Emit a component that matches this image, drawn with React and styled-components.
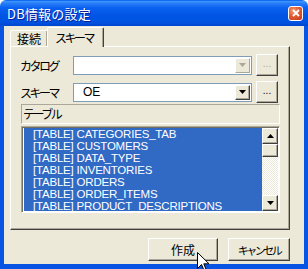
import styled, { createGlobalStyle, css } from "styled-components";

const GlobalStyle = createGlobalStyle`
  html, body { margin: 0; padding: 0; background: #fff; }
  body { font-family: "Noto Sans CJK JP", "Liberation Sans", sans-serif; }
`;

const tablas = [
  "CATEGORIES_TAB",
  "CUSTOMERS",
  "DATA_TYPE",
  "INVENTORIES",
  "ORDERS",
  "ORDER_ITEMS",
  "PRODUCT_DESCRIPTIONS",
];

const face = css`
  background: #ece9d8;
  border: 1px solid;
  border-color: #fff #404040 #404040 #fff;
  box-shadow: inset -1px -1px 0 #aca899;
  box-sizing: border-box;
`;

function Flecha({ abajo = true, color = "#000" }) {
  return (
    <svg width="7" height="4" viewBox="0 0 7 4">
      <polygon points={abajo ? "0,0 7,0 3.5,4" : "0,4 7,4 3.5,0"} fill={color} />
    </svg>
  );
}

function Cursor() {
  return (
    <CursorSvg width="13" height="20" viewBox="0 0 13 20">
      <path
        d="M0.5 0.5 L0.5 16.5 L4.5 12.5 L7.5 19.5 L9.5 18.5 L6.8 11.8 L12 11.8 Z"
        fill="#fff"
        stroke="#000"
        strokeWidth="1"
      />
    </CursorSvg>
  );
}

function Combo({ valor, deshabilitado }) {
  return (
    <ComboBox>
      <ComboValor>{valor}</ComboValor>
      <ComboBoton $off={deshabilitado}>
        <Flecha color={deshabilitado ? "#aca899" : "#000"} />
      </ComboBoton>
    </ComboBox>
  );
}

export default function App() {
  return (
    <>
      <GlobalStyle />
      <Ventana>
        <TitleBar>
          <Titulo>DB情報の設定</Titulo>
          <BtnCerrar>
            <svg width="8" height="8" viewBox="0 0 8 8">
              <path d="M1 1 L7 7 M7 1 L1 7" stroke="#fff" strokeWidth="1.8" />
            </svg>
          </BtnCerrar>
        </TitleBar>
        <Cuerpo>
          <Tabs>
            <Tab>接続</Tab>
            <Tab $activo $kana>スキーマ</Tab>
          </Tabs>
          <Panel>
            <Fila>
              <Etiqueta>カタログ</Etiqueta>
              <Combo valor="" deshabilitado />
              <BtnMini $off>...</BtnMini>
            </Fila>
            <Fila>
              <Etiqueta>スキーマ</Etiqueta>
              <Combo valor="OE" />
              <BtnMini>...</BtnMini>
            </Fila>
            <CajaTabla>テーブル</CajaTabla>
            <Lista>
              <Items>
                {tablas.map((t) => (
                  <Item key={t}>[TABLE] {t}</Item>
                ))}
              </Items>
              <Scroll>
                <ScrollBtn>
                  <Flecha abajo={false} />
                </ScrollBtn>
                <Thumb />
                <Pista />
                <ScrollBtn>
                  <Flecha />
                </ScrollBtn>
              </Scroll>
            </Lista>
          </Panel>
          <Pie>
            <Boton $ancho="70px">作成</Boton>
            <Boton $ancho="62px" $kana>キャンセル</Boton>
          </Pie>
        </Cuerpo>
        <Cursor />
      </Ventana>
    </>
  );
}

const Ventana = styled.div`
  position: relative;
  width: 308px;
  height: 269px;
  display: flex;
  flex-direction: column;
  overflow: hidden;
`;

const TitleBar = styled.div`
  height: 26px;
  flex-shrink: 0;
  display: flex;
  align-items: center;
  justify-content: space-between;
  padding: 0 5px 0 7px;
  box-sizing: border-box;
  border-radius: 6px 6px 0 0;
  background: linear-gradient(
    to bottom,
    #0058ee 0%,
    #3d95ff 6%,
    #2a80f8 12%,
    #0a61f0 30%,
    #0055e5 60%,
    #0053e0 85%,
    #0045cf 100%
  );
`;

const Titulo = styled.span`
  color: #fff;
  font-size: 13px;
  letter-spacing: 0.2px;
  text-shadow: 1px 1px 0 #0a1e9a;
`;

const BtnCerrar = styled.div`
  width: 15px;
  height: 15px;
  box-sizing: border-box;
  border: 1px solid #fff;
  border-radius: 3px;
  background: radial-gradient(circle at 35% 30%, #f09b7a 0%, #e35b2f 45%, #c4361a 100%);
  display: flex;
  align-items: center;
  justify-content: center;
`;

const Cuerpo = styled.div`
  flex: 1;
  display: flex;
  flex-direction: column;
  background: #ece9d8;
  border: 4px solid #0854e3;
  border-top: none;
  border-bottom-width: 5px;
  padding: 2px 14px 0 6px;
`;

const Tabs = styled.div`
  display: flex;
  align-items: flex-end;
  height: 18px;
  position: relative;
  z-index: 1;
`;

const Tab = styled.div`
  font-size: 12px;
  color: #000;
  background: #ece9d8;
  border: 1px solid;
  border-bottom: none;
  border-color: #fff #404040 transparent #fff;
  box-shadow: inset -1px 0 0 #aca899;
  border-radius: 2px 2px 0 0;
  height: 15px;
  line-height: 15px;
  padding: 0 6px 0 6px;
  letter-spacing: ${({ $kana }) => ($kana ? "-2.5px" : "0")};
  ${({ $activo }) =>
    $activo &&
    css`
      height: 19px;
      line-height: 19px;
      margin-left: -1px;
      margin-bottom: -1px;
      padding: 0 10px 0 7px;
    `}
`;

const Panel = styled.div`
  height: 184px;
  box-sizing: border-box;
  border: 1px solid;
  border-color: #fff #404040 #404040 #fff;
  box-shadow: inset -1px -1px 0 #aca899;
  padding: 7px 9px 0 9px;
  display: flex;
  flex-direction: column;
`;

const Fila = styled.div`
  display: flex;
  align-items: center;
  height: 22px;
  margin-bottom: 5px;
  &:nth-child(2) {
    margin-bottom: 1px;
  }
`;

const Etiqueta = styled.span`
  width: 53px;
  font-size: 12px;
  letter-spacing: -2.5px;
  color: #000;
`;

const ComboBox = styled.div`
  width: 179px;
  height: 19px;
  box-sizing: border-box;
  border: 1px solid #7f9db9;
  background: #fff;
  display: flex;
  align-items: center;
  padding: 1px;
`;

const ComboValor = styled.span`
  flex: 1;
  font-family: "Liberation Sans", sans-serif;
  font-size: 12px;
  padding-left: 8px;
  color: #000;
`;

const ComboBoton = styled.div`
  ${face}
  width: 15px;
  height: 15px;
  display: flex;
  align-items: center;
  justify-content: center;
  ${({ $off }) =>
    $off &&
    css`
      border-color: #fff #aca899 #aca899 #fff;
      box-shadow: none;
    `}
`;

const BtnMini = styled.div`
  ${face}
  width: 22px;
  height: 22px;
  margin-left: 4px;
  display: flex;
  align-items: center;
  justify-content: center;
  font-family: "Liberation Sans", sans-serif;
  font-size: 10px;
  line-height: 10px;
  padding-bottom: 2px;
  color: ${({ $off }) => ($off ? "#aca899" : "#000")};
`;

const CajaTabla = styled.div`
  height: 20px;
  margin-left: 1px;
  box-sizing: border-box;
  border: 1px solid;
  border-color: #aca899 #fff #fff #aca899;
  font-size: 12px;
  letter-spacing: -2.5px;
  line-height: 17px;
  padding-left: 1px;
  color: #000;
`;

const Lista = styled.div`
  margin-top: 2px;
  margin-left: 1px;
  height: 87px;
  box-sizing: border-box;
  border: 1px solid;
  border-color: #aca899 #fff #fff #aca899;
  box-shadow: inset 1px 1px 0 #716f64;
  background: #fff;
  padding: 1px 1px 1px 2px;
  display: flex;
`;

const Items = styled.div`
  flex: 1;
  overflow: hidden;
  background: #fff;
`;

const Item = styled.div`
  background: #316ac5;
  color: #fff;
  font-family: "Liberation Sans", sans-serif;
  font-size: 11.5px;
  letter-spacing: -0.2px;
  height: 12px;
  line-height: 12px;
  padding-left: 9px;
  white-space: nowrap;
`;

const Scroll = styled.div`
  width: 16px;
  display: flex;
  flex-direction: column;
`;

const ScrollBtn = styled.div`
  ${face}
  height: 16px;
  display: flex;
  align-items: center;
  justify-content: center;
`;

const Thumb = styled.div`
  ${face}
  height: 13px;
`;

const Pista = styled.div`
  flex: 1;
  background-color: #fff;
  background-image: repeating-conic-gradient(#ece9d8 0% 25%, #fff 0% 50%);
  background-size: 2px 2px;
`;

const Pie = styled.div`
  display: flex;
  justify-content: flex-end;
  gap: 10px;
  margin-top: 8px;
`;

const Boton = styled.div`
  ${face}
  width: ${({ $ancho }) => $ancho};
  height: 23px;
  display: flex;
  align-items: center;
  justify-content: center;
  font-size: ${({ $kana }) => ($kana ? "11px" : "12px")};
  letter-spacing: ${({ $kana }) => ($kana ? "-2.5px" : "0")};
  color: #000;
`;

const CursorSvg = styled.svg`
  position: absolute;
  left: 197px;
  top: 252px;
`;
